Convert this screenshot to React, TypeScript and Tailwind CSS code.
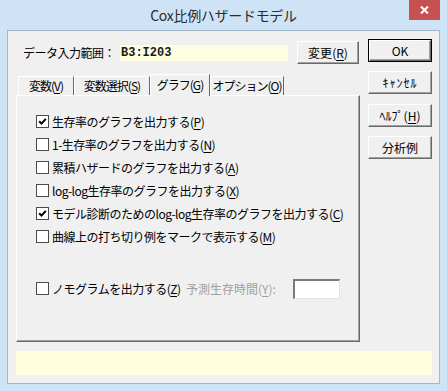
import type { ReactNode } from 'react';

function Btn({ children, isDefault = false }: { children: ReactNode; isDefault?: boolean }) {
  const face = (
    <div className="flex h-full w-full items-center justify-center whitespace-nowrap border-t border-l border-t-white border-l-white border-b border-r border-b-[#696969] border-r-[#696969] bg-[#f0f0f0] text-[12px] leading-none text-black shadow-[inset_-1px_-1px_0_#a0a0a0]">
      {children}
    </div>
  );
  if (isDefault) {
    return <div className="h-[23px] w-full border border-black">{face}</div>;
  }
  return <div className="h-[23px] w-full">{face}</div>;
}

function Check({ checked = false }: { checked?: boolean }) {
  return (
    <span className="flex h-[13px] w-[13px] shrink-0 items-center justify-center border border-[#4a4a4a] bg-white">
      {checked && (
        <svg width="9" height="9" viewBox="0 0 9 9">
          <path d="M1.2 4.2 L3.5 6.6 L7.8 1.8" stroke="#000" strokeWidth="2" fill="none" />
        </svg>
      )}
    </span>
  );
}

function Key({ k }: { k: string }) {
  return (
    <>
      (<span className="underline underline-offset-[2px]">{k}</span>)
    </>
  );
}

function Option({ checked, text, k }: { checked?: boolean; text: string; k: string }) {
  return (
    <div className="flex h-[23px] items-center">
      <Check checked={checked} />
      <span className="ml-[3px] whitespace-nowrap text-[12px] leading-[14px] tracking-[-0.5px]">
        {text}
        <Key k={k} />
      </span>
    </div>
  );
}

function Tab({ label, k, width, active = false }: { label: string; k: string; width: string; active?: boolean }) {
  return (
    <div
      className={
        active
          ? `relative z-10 -mb-[1px] flex h-[22px] shrink-0 items-center justify-center border-t border-l border-r border-t-white border-l-white border-r-[#696969] bg-[#f0f0f0] pb-[2px] ${width}`
          : `flex h-[19px] shrink-0 items-center justify-center border-t border-l border-r border-t-white border-l-white border-r-[#696969] bg-[#f0f0f0] ${width}`
      }
    >
      <span className="whitespace-nowrap text-[12px] leading-[14px] tracking-[-1px]">
        {label}
        <Key k={k} />
      </span>
    </div>
  );
}

export default function App() {
  return (
    <div className="h-[391px] w-[447px] overflow-hidden bg-[#cfe3f6] font-['Noto_Sans_CJK_JP',sans-serif] text-black">
      <div className="relative flex h-[30px] items-center justify-center">
        <span className="text-[14px] leading-none tracking-[-0.3px] text-[#2a2a2a]">Cox比例ハザードモデル</span>
        <div className="absolute right-[7px] top-0 flex h-[20px] w-[31px] items-center justify-center bg-[#c75050]">
          <svg width="9" height="8" viewBox="0 0 9 8">
            <path d="M1 0.5 L8 7.5 M8 0.5 L1 7.5" stroke="#fff" strokeWidth="2" />
          </svg>
        </div>
      </div>

      <div className="mx-[7px] flex h-[354px] flex-col border border-[#a2b6cc] bg-[#f0f0f0] pl-[8px] pr-[7px] pt-[8px]">
        <div className="flex">
          <div className="flex w-[344px] flex-col">
            <div className="mt-[2px] flex h-[23px] items-center">
              <span className="w-[104px] whitespace-nowrap pl-[7px] text-[12px] leading-none tracking-[-0.5px]">データ入力範囲：</span>
              <div className="flex h-[16px] w-[168px] items-center bg-[#ffffe0] pl-[1px] font-['Liberation_Mono',monospace] text-[12px] font-bold leading-none text-[#1a1a1a]">
                B3:I203
              </div>
              <div className="ml-[9px] w-[62px]">
                <Btn>
                  変更<Key k="R" />
                </Btn>
              </div>
            </div>

            <div className="mt-[10px] flex h-[21px] items-end pl-[2px]">
              <Tab label="変数" k="V" width="w-[56px]" />
              <Tab label="変数選択" k="S" width="w-[76px]" />
              <Tab label="グラフ" k="G" width="w-[60px]" active />
              <Tab label="オプション" k="O" width="w-[74px]" />
            </div>

            <div className="flex h-[247px] flex-col border-t border-l border-t-white border-l-white border-b border-r border-b-[#696969] border-r-[#696969] pl-[19px] pt-[14px] shadow-[inset_-1px_-1px_0_#a0a0a0]">
              <Option checked text="生存率のグラフを出力する" k="P" />
              <Option text="1-生存率のグラフを出力する" k="N" />
              <Option text="累積ハザードのグラフを出力する" k="A" />
              <Option text="log-log生存率のグラフを出力する" k="X" />
              <Option checked text="モデル診断のためのlog-log生存率のグラフを出力する" k="C" />
              <Option text="曲線上の打ち切り例をマークで表示する" k="M" />

              <div className="mt-[29px] flex h-[23px] items-center">
                <Check />
                <span className="ml-[3px] w-[122px] whitespace-nowrap text-[12px] leading-[14px] tracking-[-0.5px]">
                  ノモグラムを出力する<Key k="Z" />
                </span>
                <span className="ml-[12px] w-[101px] whitespace-nowrap text-[12px] leading-[14px] text-[#a0a0a0]">
                  予測生存時間<Key k="Y" />:
                </span>
                <div className="ml-[6px] h-[20px] w-[47px] border-t-2 border-l-2 border-t-[#7a7a7a] border-l-[#7a7a7a] border-b border-r border-b-[#e3e3e3] border-r-[#e3e3e3] bg-white" />
              </div>
            </div>
          </div>

          <div className="ml-[8px] flex w-[64px] flex-col">
            <Btn isDefault>OK</Btn>
            <div className="mt-[9px]">
              <Btn>
                <span className="tracking-[1px]">ｷｬﾝｾﾙ</span>
              </Btn>
            </div>
            <div className="mt-[10px]">
              <Btn>
                ﾍﾙﾌﾟ<Key k="H" />
              </Btn>
            </div>
            <div className="mt-[9px]">
              <Btn>分析例</Btn>
            </div>
          </div>
        </div>

        <div className="mt-[9px] h-[24px] w-[416px] bg-[#ffffe0]" />
      </div>
    </div>
  );
}
